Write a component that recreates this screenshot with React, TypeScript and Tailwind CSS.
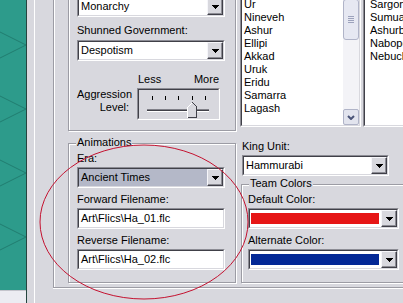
import React from "react";

const Sunken = ({
  className = "",
  inner = "",
  children,
}: {
  className?: string;
  inner?: string;
  children?: React.ReactNode;
}) => (
  <div className={"border border-t-[#8c8c94] border-l-[#8c8c94] border-b-white border-r-white " + className}>
    <div
      className={
        "w-full h-full border border-t-[#404048] border-l-[#404048] border-b-[#d8d8de] border-r-[#d8d8de] " + inner
      }
    >
      {children}
    </div>
  </div>
);

const DropBtn = () => (
  <div className="w-[16px] h-full shrink-0 bg-[#d8d8de] border border-t-[#f6f6fa] border-l-[#f6f6fa] border-b-[#404048] border-r-[#404048] shadow-[inset_-1px_-1px_0_#8c8c94] flex items-center justify-center">
    <svg width="7" height="4" shapeRendering="crispEdges" className="block">
      <rect x="0" y="0" width="7" height="1" fill="#000" />
      <rect x="1" y="1" width="5" height="1" fill="#000" />
      <rect x="2" y="2" width="3" height="1" fill="#000" />
      <rect x="3" y="3" width="1" height="1" fill="#000" />
    </svg>
  </div>
);

const Combo = ({ w, text, bg = "bg-white" }: { w: string; text: string; bg?: string }) => (
  <Sunken className={"h-[21px] " + w} inner={"flex " + bg}>
    <div className="flex-1 pl-[2px] flex items-center overflow-hidden whitespace-nowrap">{text}</div>
    <DropBtn />
  </Sunken>
);

const ColorCombo = ({ color }: { color: string }) => (
  <Sunken className="h-[21px] w-[151px]" inner="flex bg-white">
    <div className="flex-1 pl-[1px] pr-[2px] py-[3px] flex">
      <div className={"flex-1 " + color} />
    </div>
    <DropBtn />
  </Sunken>
);

const TextBox = ({ text }: { text: string }) => (
  <Sunken className="h-[21px] w-[148px]" inner="flex items-center bg-white pl-[2px] whitespace-nowrap overflow-hidden">
    {text}
  </Sunken>
);

const Etched =
  "border border-[#9c9ca4] shadow-[inset_1px_1px_0_#fff,1px_1px_0_#fff]";

export default function App() {
  const leftItems = ["Ur", "Nineveh", "Ashur", "Ellipi", "Akkad", "Uruk", "Eridu", "Samarra", "Lagash"];
  const rightItems = ["Sargon", "Sumuabum", "Ashurbanipal", "Nabopolassar", "Nebuchadnezzar"];
  return (
    <div className="relative w-[403px] h-[303px] overflow-hidden flex bg-[#d8d8de] text-[11px] leading-[13px] text-black font-['Liberation_Sans',Arial,sans-serif]">
      {/* map background */}
      <div className="w-[26px] shrink-0 flex flex-col">
        <div className="h-[290px] bg-[#2d9b8b]">
          <svg width="26" height="290" className="block">
            {[45, 109, 173, 237].map((c) => (
              <g key={c} stroke="#1f7468" strokeWidth="1" opacity="0.75">
                <line x1="0" y1={c - 13} x2="26" y2={c} />
                <line x1="0" y1={c + 13} x2="26" y2={c} />
              </g>
            ))}
          </svg>
        </div>
        <div className="flex-1 bg-[#ececf2] border-t border-[#c4c4cc]" />
      </div>
      <div className="w-px shrink-0 bg-[#26453f]" />
      <div className="w-[7px] shrink-0" />
      <div className="w-px shrink-0 bg-white" />
      <div className="w-[18px] shrink-0" />

      {/* dialog panel */}
      <div className="flex-1 min-w-0 flex flex-col">
        <div className="h-[288px] border-l border-b border-[#9c9ca4] shadow-[inset_1px_0_0_#fff,0_1px_0_#fff] flex pl-[14px]">
          {/* left column */}
          <div className="w-[168px] shrink-0 flex flex-col">
            <div className={"-mt-[12px] pl-[8px] pt-[7px] pb-[10px] " + Etched}>
              <Combo w="w-[148px]" text="Monarchy" />
              <div className="mt-[7px]">Shunned Government:</div>
              <div className="mt-[3px]">
                <Combo w="w-[148px]" text="Despotism" />
              </div>
              <div className="mt-[12px] flex">
                <div className="w-[52px] pt-[15px] text-right">
                  <div>Aggression</div>
                  <div>Level:</div>
                </div>
                <div className="ml-[8px] w-[83px]">
                  <div className="flex justify-between px-[1px]">
                    <span>Less</span>
                    <span>More</span>
                  </div>
                  <Sunken className="mt-[2px] h-[32px] w-[83px]">
                    <svg width="79" height="28" className="block" shapeRendering="crispEdges">
                      {[13, 26, 39, 53, 66].map((x) => (
                        <rect key={x} x={x} y="6" width="1" height="4" fill="#000" />
                      ))}
                      <rect x="8" y="19" width="62" height="1" fill="#808088" />
                      <rect x="8" y="20" width="62" height="1" fill="#404048" />
                      <rect x="8" y="21" width="62" height="1" fill="#ffffff" />
                      <polygon points="48,17 53,12 58,17 58,28 48,28" fill="#d8d8de" />
                      <polyline points="48.5,27.5 48.5,17.5 53.5,12.5" fill="none" stroke="#ffffff" />
                      <polyline points="53.5,12.5 57.5,16.5 57.5,27.5 48.5,27.5" fill="none" stroke="#404048" />
                    </svg>
                  </Sunken>
                </div>
              </div>
            </div>

            <div className={"relative mt-[12px] pl-[8px] pt-[8px] pb-[12px] " + Etched}>
              <span className="absolute -top-[8px] left-[7px] px-[1px] bg-[#d8d8de]">Animations</span>
              <div>Era:</div>
              <div className="mt-[2px]">
                <Combo w="w-[148px]" text="Ancient Times" bg="bg-[#b4b8c8]" />
              </div>
              <div className="mt-[5px]">Forward Filename:</div>
              <div className="mt-[2px]">
                <TextBox text="Art\Flics\Ha_01.flc" />
              </div>
              <div className="mt-[5px]">Reverse Filename:</div>
              <div className="mt-[2px]">
                <TextBox text="Art\Flics\Ha_02.flc" />
              </div>
            </div>
          </div>

          {/* right column */}
          <div className="ml-[4px] flex-1 min-w-0 flex flex-col">
            <div className="-mt-[19px] h-[146px] flex shrink-0">
              <Sunken className="w-[121px] shrink-0" inner="flex bg-white">
                <div className="flex-1 pl-[2px] pt-[15px] overflow-hidden">
                  {leftItems.map((t) => (
                    <div key={t}>{t}</div>
                  ))}
                </div>
                <div className="w-[16px] flex flex-col bg-[#f3f3f7]">
                  <div className="h-[16px] rounded-[2px] border border-[#b0b4c8] bg-[#e4e6f0]" />
                  <div className="h-[41px] rounded-[3px] border border-[#b0b4c8] bg-[#e6e8f2] flex flex-col items-center justify-center gap-[1px]">
                    <div className="w-[6px] h-px bg-[#9ca2bc]" />
                    <div className="w-[6px] h-px bg-[#9ca2bc]" />
                    <div className="w-[6px] h-px bg-[#9ca2bc]" />
                    <div className="w-[6px] h-px bg-[#9ca2bc]" />
                  </div>
                  <div className="flex-1" />
                  <div className="h-[16px] rounded-[2px] border border-[#b0b4c8] bg-[#e2e4ee] flex items-center justify-center">
                    <svg width="8" height="5" className="block">
                      <path d="M1 1 L4 4 L7 1" fill="none" stroke="#4a5478" strokeWidth="2" />
                    </svg>
                  </div>
                </div>
              </Sunken>
              <Sunken className="ml-[2px] w-[80px] shrink-0" inner="bg-white pl-[5px] pt-[15px] overflow-hidden whitespace-nowrap">
                {rightItems.map((t) => (
                  <div key={t}>{t}</div>
                ))}
              </Sunken>
            </div>

            <div className="mt-[13px] ml-[2px]">King Unit:</div>
            <div className="mt-[2px] ml-[2px]">
              <Combo w="w-[147px]" text="Hammurabi" />
            </div>

            <div className={"relative mt-[8px] ml-[1px] w-[200px] shrink-0 pl-[6px] pt-[8px] pb-[12px] " + Etched}>
              <span className="absolute -top-[8px] left-[7px] px-[1px] bg-[#d8d8de]">Team Colors</span>
              <div>Default Color:</div>
              <div className="mt-[2px]">
                <ColorCombo color="bg-[#e61616]" />
              </div>
              <div className="mt-[5px]">Alternate Color:</div>
              <div className="mt-[2px]">
                <ColorCombo color="bg-[#032896]" />
              </div>
            </div>
          </div>
        </div>
        <div className="flex-1" />
      </div>

      {/* red annotation ellipse */}
      <svg className="absolute left-0 top-0 pointer-events-none" width="403" height="303">
        <ellipse cx="144" cy="222" rx="104" ry="77" fill="none" stroke="#c41230" strokeWidth="1" />
      </svg>
    </div>
  );
}
